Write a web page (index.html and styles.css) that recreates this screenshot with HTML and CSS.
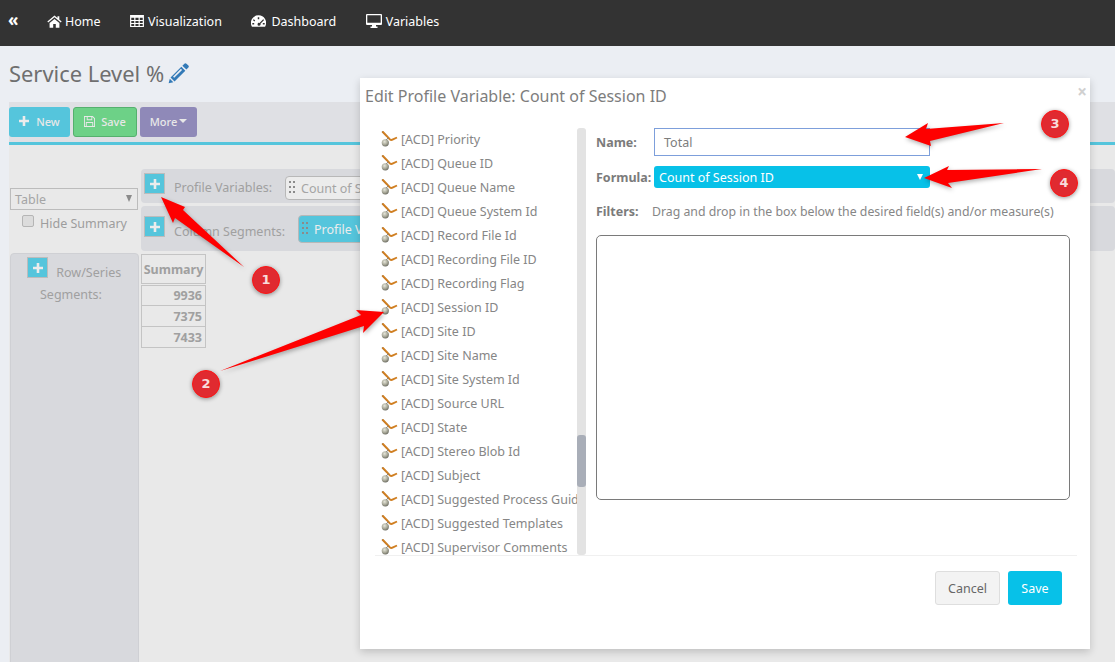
FILE: index.html
```html
<!DOCTYPE html>
<html lang="en">
<head>
<meta charset="utf-8">
<title>Service Level %</title>
<link rel="stylesheet" href="styles.css">
</head>
<body>
<svg class="defs" width="0" height="0" aria-hidden="true">
  <defs>
    <radialGradient id="bead" cx="40%" cy="35%" r="70%"><stop offset="0" stop-color="#e6e6da"/><stop offset=".6" stop-color="#a5a595"/><stop offset="1" stop-color="#66665c"/></radialGradient>
    <symbol id="field" viewBox="0 0 17 16">
      <path d="M1 .5 6 5.500" fill="none" stroke="#8a6a45" stroke-width="1.200"/>
      <path d="M1.500 0.500 9 8.500c1 .8 2 .5 3-.1l4-1.900" fill="none" stroke="#d07f22" stroke-width="1.900"/>
      <path d="M5 9 7.500 6.800" fill="none" stroke="#777" stroke-width="1"/>
      <circle cx="4.300" cy="11.800" r="3.600" fill="url(#bead)"/>
    </symbol>
    <symbol id="plus" viewBox="0 0 10 10"><path d="M3.700 0h2.600v3.700H10v2.600H6.300V10H3.700V6.300H0V3.700h3.700z"/></symbol>
  </defs>
</svg>
<nav class="nav">
  <span class="nav-collapse">«</span>
  <a class="nav-item"><svg class="nav-icon home" viewBox="0 0 16 14"><path d="M8 .6.300 7l.9 1.100L8 2.500l6.800 5.600.9-1.100L13.200 4.900V1.300h-2v2zM2.700 8.600V13.600h3.900V9.800h2.800v3.800h3.900V8.600L8 4.200z"/></svg>Home</a>
  <a class="nav-item"><svg class="nav-icon grid" viewBox="0 0 15 13"><path fill-rule="evenodd" d="M0 0h15v13H0zM1.300 3v2.300h3.200V3zM5.800 3v2.300h3.400V3zM10.500 3v2.300h3.200V3zM1.300 6.400v2.200h3.200V6.400zM5.800 6.400v2.200h3.400V6.400zM10.500 6.400v2.200h3.200V6.400zM1.300 9.700V12h3.200V9.700zM5.800 9.700V12h3.400V9.700zM10.500 9.700V12h3.200V9.700z"/></svg>Visualization</a>
  <a class="nav-item"><svg class="nav-icon dash" viewBox="0 0 16 12"><path fill-rule="evenodd" d="M8 0a8 8 0 0 1 7 12H1A8 8 0 0 1 8 0zM7.200 2v2h1.600V2zM3 4l-1 1 1.500 1.400 1-1zM13 4l-3.900 4a1.600 1.600 0 1 0 1 1l3.900-4zM1.400 8v1.600h2V8zM12.600 8v1.600h2V8z"/></svg>Dashboard</a>
  <a class="nav-item"><svg class="nav-icon mon" viewBox="0 0 16 14"><path fill-rule="evenodd" d="M1 0h14a1 1 0 0 1 1 1v9a1 1 0 0 1-1 1H10v1.400h1.500V14h-7v-1.600H6V11H1a1 1 0 0 1-1-1V1a1 1 0 0 1 1-1zM1.300 1.300V8.800h13.400V1.300z"/></svg>Variables</a>
</nav>

<main class="page">
  <h1 class="title">Service Level % <svg class="pencil" viewBox="0 0 20 20"><path d="M15.600.6a1.500 1.500 0 0 1 2 0l1.800 1.800a1.500 1.500 0 0 1 0 2l-1.900 1.900-3.800-3.800zM12.700 3.500l3.800 3.800L6.200 17.600 2.400 13.800zM4.800 13l1.100 1.100 7.500-7.500-1.100-1.100zM1.700 14.900l3.400 3.400-4.500 1.100z"/></svg></h1>
  <section class="panel">
    <div class="toolbar">
      <button class="tbtn new"><svg class="plus small"><use href="#plus"/></svg>New</button>
      <button class="tbtn save"><svg class="floppy" viewBox="0 0 12 12"><path fill-rule="evenodd" d="M0 0h9.500L12 2.500V12H0zM1 1v10h1V6.500h8V11h1V3L9 1v3.500H3V1zM4 1v2.500h4V1zM3 7.500V11h6V7.500z"/></svg>Save</button>
      <button class="tbtn more">More<i class="caret"></i></button>
    </div>
    <div class="work">
      <div class="left">
        <div class="select-box">Table<i class="sel-arrow"></i></div>
        <label class="hide"><i class="check"></i>Hide Summary</label>
        <div class="rows-box">
          <span class="addbtn"><svg class="plus"><use href="#plus"/></svg></span>
          <span class="rows-a">Row/Series</span>
          <span class="rows-b">Segments:</span>
        </div>
      </div>
      <div class="right">
        <div class="seg seg1">
          <span class="addbtn"><svg class="plus"><use href="#plus"/></svg></span>
          <span class="seg-label">Profile Variables:</span>
          <span class="chip"><i class="grip"></i>Count of Session ID</span>
        </div>
        <div class="seg seg2">
          <span class="addbtn"><svg class="plus"><use href="#plus"/></svg></span>
          <span class="seg-label">Column Segments:</span>
          <span class="chip teal"><i class="grip"></i>Profile Variables</span>
        </div>
        <table class="tbl">
          <thead><tr><th>Summary</th></tr></thead>
          <tbody><tr><td>9936</td></tr><tr><td>7375</td></tr><tr><td>7433</td></tr></tbody>
        </table>
      </div>
    </div>
  </section>
</main>

<div class="modal">
  <h2 class="modal-title">Edit Profile Variable: Count of Session ID</h2>
  <span class="close">×</span>
  <div class="modal-body">
    <div class="fields">
      <ul class="field-list">
        <li><svg class="ico"><use href="#field"/></svg>[ACD] Priority</li>
        <li><svg class="ico"><use href="#field"/></svg>[ACD] Queue ID</li>
        <li><svg class="ico"><use href="#field"/></svg>[ACD] Queue Name</li>
        <li><svg class="ico"><use href="#field"/></svg>[ACD] Queue System Id</li>
        <li><svg class="ico"><use href="#field"/></svg>[ACD] Record File Id</li>
        <li><svg class="ico"><use href="#field"/></svg>[ACD] Recording File ID</li>
        <li><svg class="ico"><use href="#field"/></svg>[ACD] Recording Flag</li>
        <li><svg class="ico"><use href="#field"/></svg>[ACD] Session ID</li>
        <li><svg class="ico"><use href="#field"/></svg>[ACD] Site ID</li>
        <li><svg class="ico"><use href="#field"/></svg>[ACD] Site Name</li>
        <li><svg class="ico"><use href="#field"/></svg>[ACD] Site System Id</li>
        <li><svg class="ico"><use href="#field"/></svg>[ACD] Source URL</li>
        <li><svg class="ico"><use href="#field"/></svg>[ACD] State</li>
        <li><svg class="ico"><use href="#field"/></svg>[ACD] Stereo Blob Id</li>
        <li><svg class="ico"><use href="#field"/></svg>[ACD] Subject</li>
        <li><svg class="ico"><use href="#field"/></svg>[ACD] Suggested Process Guide</li>
        <li><svg class="ico"><use href="#field"/></svg>[ACD] Suggested Templates</li>
        <li><svg class="ico"><use href="#field"/></svg>[ACD] Supervisor Comments</li>
      </ul>
      <div class="scrollbar"><i class="thumb"></i></div>
    </div>
    <div class="form">
      <div class="row name-row"><label class="lbl">Name:</label><div class="input">Total</div></div>
      <div class="row formula-row"><label class="lbl">Formula:</label><div class="formula">Count of Session ID<i class="form-arrow"></i></div></div>
      <div class="row filter-row"><label class="lbl">Filters:</label><span class="hint">Drag and drop in the box below the desired field(s) and/or measure(s)</span></div>
      <div class="dropbox"></div>
    </div>
  </div>
  <div class="modal-foot">
    <button class="btn cancel">Cancel</button>
    <button class="btn primary">Save</button>
  </div>
</div>

<svg class="arrows" viewBox="0 0 1115 662">
  <path d="M161 197 185 207 183 210 244 267 175 218 173 223z"/>
  <path d="M384 312 356 310 361 315 220 371 364 326 363 333z"/>
  <path d="M905 137 928 123 926 129 1004 123 930 141 931 146z"/>
  <path d="M924 178 949 166 947 170 1042 169 948 183 952 188z"/>
</svg>
<span class="badge b1">1</span>
<span class="badge b2">2</span>
<span class="badge b3">3</span>
<span class="badge b4">4</span>
</body>
</html>
```
FILE: styles.css
```css
* { box-sizing: border-box; }
html, body { margin: 0; height: 100%; overflow: hidden; }
body { position: relative; width: 1115px; height: 662px; background: #ebeef3; font-family: "Noto Sans", sans-serif; font-size: 12.5px; color: #8b8b8b; }
.defs { position: absolute; }

.nav { height: 46px; background: #333; display: flex; align-items: center; color: #fff; padding: 0 0 4px 8px; }
.nav-collapse { font-size: 17px; font-weight: 700; width: 39px; line-height: 1; margin-top: -3px; }
.nav-item { display: flex; align-items: center; font-size: 12.5px; margin-right: 29.500px; }
.nav-icon { fill: #fff; flex: none; }
.home { width: 15px; height: 13px; margin-right: 3px; }
.grid { width: 14px; height: 12px; margin-right: 4px; }
.dash { width: 15px; height: 12px; margin-right: 5px; }
.mon { width: 16px; height: 14px; margin-right: 4px; }

.page { padding-left: 9px; }
.title { margin: 0; height: 56px; padding-top: 13px; font-size: 21.9px; font-weight: 400; line-height: 30px; color: #6f6f6f; }
.pencil { width: 21px; height: 21px; fill: #337ab7; vertical-align: -2px; margin-left: -2px; }

.panel { background: #e9e9e9; height: 560px; }
.toolbar { height: 43px; background: #dfe0e4; border-bottom: 3px solid #55c5dc; padding-top: 5px; display: flex; gap: 3px; }
.tbtn { height: 30px; border: 1px solid transparent; border-radius: 3px; color: #e8e8e8; font: 500 11px "Noto Sans", sans-serif; display: flex; align-items: center; justify-content: center; padding: 0 0 2px; }
.new { width: 61px; background: #55c5dc; }
.save { width: 64px; background: #6dd187; border-color: #55b06e; }
.more { width: 57px; background: #8f89b8; }
.plus { width: 10px; height: 10px; fill: #ececec; display: block; }
.plus.small { margin-right: 7px; }
.floppy { width: 11px; height: 11px; fill: #e8e8e8; margin-right: 6px; }
.caret { width: 0; height: 0; border: 4px solid transparent; border-top-color: #e8e8e8; border-bottom: 0; margin-left: 2px; }

.work { display: flex; }
.left { width: 130px; margin-left: 1px; padding-top: 43px; flex: none; }
.select-box { height: 22px; border: 1px solid #bcbcbc; padding-left: 4px; line-height: 21px; font-size: 12.5px; color: #a5a5a5; position: relative; width: 128px; }
.sel-arrow { position: absolute; right: 5px; top: 6px; border: 3px solid transparent; border-top: 7px solid #8b8b8b; border-bottom: 0; }
.hide { display: flex; align-items: center; height: 22px; margin-top: 2px; padding-left: 12px; color: #9d9d9d; }
.check { width: 12px; height: 12px; border: 1px solid #b5b5b5; background: #dcdcdc; border-radius: 2px; margin: -4px 6px 0 0; }
.rows-box { margin-top: 19px; width: 129px; height: 420px; background: #d8d9dd; border: 1px solid #cfd0d4; border-radius: 4px; padding-top: 3px; color: #a0a0a0; }
.addbtn { width: 21px; height: 21px; background: #55c5dc; border: 1px solid #bcbcbc; display: flex; align-items: center; justify-content: center; flex: none; }
.rows-box .addbtn { margin-left: 16px; display: inline-flex; vertical-align: top; }
.rows-a { margin-left: 5px; display: inline-block; line-height: 32px; }
.rows-b { display: block; margin: -3px 0 0 29px; line-height: 18px; }

.right { margin-left: 1px; padding-top: 24px; width: 974px; flex: none; }
.seg { background: #d8d9dd; border-radius: 4px; display: flex; align-items: flex-start; padding-left: 3px; }
.seg1 { height: 34px; padding-top: 4px; }
.seg2 { height: 45px; margin-top: 3px; padding-top: 10px; }
.seg-label { margin-left: 9px; margin-top: 6px; color: #a0a0a0; width: 111px; white-space: nowrap; }
.seg2 .seg-label { width: 124px; margin-top: 7px; }
.chip { height: 24px; border: 1px solid #b8b8b8; background: #ececec; border-radius: 4px; display: flex; align-items: center; color: #a5a5a5; padding-left: 3px; white-space: nowrap; }
.seg1 .chip { margin-top: 3px; width: 200px; }
.teal { background: #55c5dc; color: #ececec; height: 28px; margin-top: -1px; width: 200px; }
.grip { width: 6px; height: 14px; margin-right: 6px; background: radial-gradient(circle at 1px 1px, #8b8b8b 1px, transparent 1.300px) 0 0 / 4px 5px; flex: none; }
.tbl { border-collapse: separate; border-spacing: 0; margin-top: 3px; color: #a0a0a0; font-weight: 700; border: 0; font-size: 12.5px; }
.tbl th { width: 65px; height: 30px; border: 1px solid #c4c4c4; text-align: center; padding: 0; font-size: 12.5px; }
.tbl td { height: 21px; border: 1px solid #c4c4c4; border-top: 0; text-align: right; padding: 0 3px 0 0; }
.tbl tbody tr:first-child td { border-top: 1px solid #c4c4c4; }
.tbl tbody::before { content: ""; display: block; height: 1px; }

.modal { position: absolute; left: 360px; top: 78px; width: 730px; height: 571px; background: #fff; box-shadow: 0 3px 8px rgba(0,0,0,.18); display: flex; flex-direction: column; }
.modal-title { margin: 0; height: 49px; padding: 7px 0 0 5px; font-size: 16px; line-height: 22px; font-weight: 400; color: #7d7d7d; }
.close { position: absolute; right: 3px; top: 4px; font-size: 17px; font-weight: 700; color: #d0d0d0; line-height: 20px; }
.modal-body { display: flex; height: 429px; margin: 0 13px 0 15px; border-bottom: 1px solid #f0f0f0; }
.fields { display: flex; width: 211px; flex: none; overflow: hidden; }
.field-list { list-style: none; margin: 0; padding: 0 0 0 6px; width: 202px; height: 428px; overflow: hidden; flex: none; }
.field-list li { display: flex; align-items: center; height: 24px; color: #868686; white-space: nowrap; }
.ico { width: 17px; height: 16px; margin-right: 3px; flex: none; }
.scrollbar { width: 9px; height: 427px; margin-top: 1px; background: #e3e3e3; border-radius: 3px; position: relative; flex: none; }
.thumb { position: absolute; left: 0; top: 307px; width: 9px; height: 52px; background: #a9aeb8; border-radius: 3px; }
.form { flex: 1; padding-left: 10px; }
.row { display: flex; align-items: center; }
.lbl { font-weight: 700; color: #7b7b7b; white-space: nowrap; }
.name-row { height: 28px; margin-top: 1px; }
.name-row .lbl, .formula-row .lbl { width: 58px; }
.input { width: 276px; height: 28px; border: 1px solid #7d9fdb; line-height: 28px; padding-left: 9px; color: #7d7d7d; }
.formula-row { height: 22px; margin-top: 10px; }
.formula { width: 276px; height: 22px; background: #07c1e8; border-radius: 3px; color: #fff; line-height: 24px; padding-left: 5px; position: relative; }
.form-arrow { position: absolute; right: 7px; top: 8px; border: 3.500px solid transparent; border-top: 6px solid #fff; border-bottom: 0; }
.filter-row { height: 22px; margin-top: 12px; }
.filter-row .lbl { width: 56px; }
.hint { color: #868686; font-size: 12.3px; white-space: nowrap; }
.dropbox { width: 474px; height: 265px; margin-top: 13px; border: 1px solid #7a7a7a; border-radius: 5px; }
.modal-foot { display: flex; justify-content: flex-end; gap: 8px; padding: 15px 28px 0 0; }
.btn { height: 34px; border-radius: 3px; font: 400 12.5px "Noto Sans", sans-serif; padding: 0; }
.cancel { width: 65px; background: #f3f3f3; border: 1px solid #dedede; color: #666; }
.primary { width: 54px; background: #07c1e8; border: 0; color: #fff; }

.arrows { position: absolute; left: 0; top: 0; width: 1115px; height: 662px; fill: #fe0000; filter: drop-shadow(1px 2px 2px rgba(0,0,0,.3)); pointer-events: none; }
.badge { position: absolute; width: 28px; height: 28px; border-radius: 50%; background: #e02a30; border: 1px solid #ff1414; box-shadow: 0 1px 4px rgba(0,0,0,.4); color: #f8dcdc; font: 700 13px/26px "DejaVu Sans", sans-serif; text-align: center; }
.b1 { left: 252px; top: 266px; }
.b2 { left: 192px; top: 370px; }
.b3 { left: 1041px; top: 110px; }
.b4 { left: 1050px; top: 169px; }
```
